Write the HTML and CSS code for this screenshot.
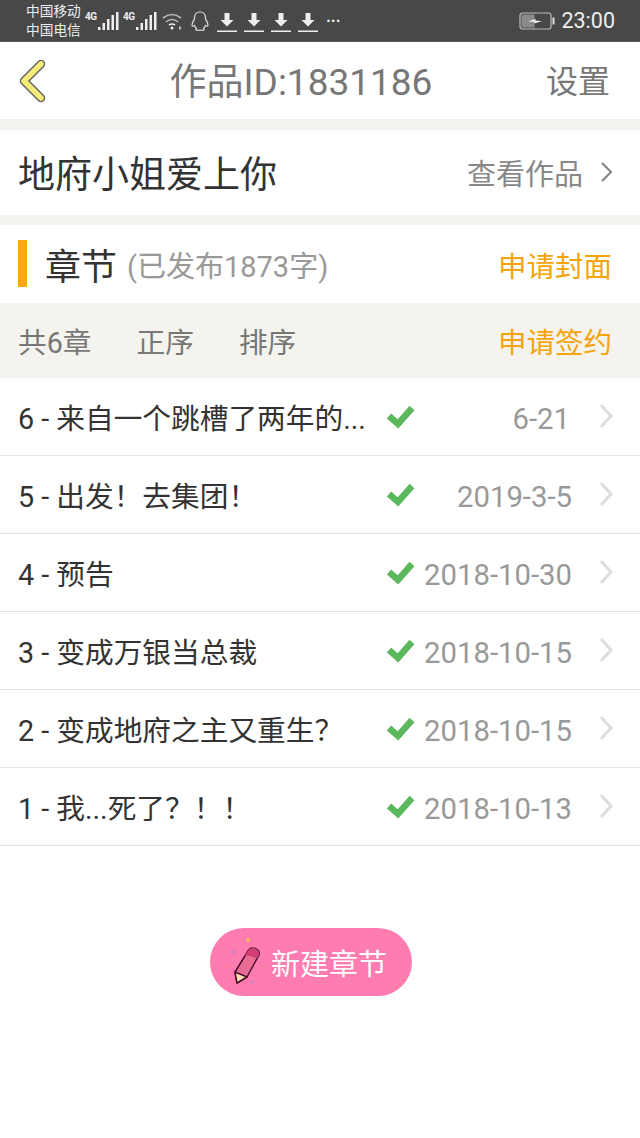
FILE: index.html
```html
<!DOCTYPE html>
<html lang="zh">
<head>
    <meta charset="UTF-8">
    <title>作品ID:1831186</title>
    <link rel="stylesheet" href="styles.css">
</head>
<body>
    <div class="status-bar">
        <div class="carrier"><span>中国移动</span><span>中国电信</span></div>
        <div class="signal">
            <span class="net">4G</span>
            <svg width="22" height="20" viewBox="0 0 22 20"><path d="M1 16h2.500v3H1zM5.500 12h2.500v7H5.500zM10 8h2.500v11H10zM14.500 4h2.500v15h-2.500zM19 1h2.500v18H19z" fill="#eee"/></svg>
        </div>
        <div class="signal">
            <span class="net">4G</span>
            <svg width="22" height="20" viewBox="0 0 22 20"><path d="M1 16h2.500v3H1zM5.500 12h2.500v7H5.500zM10 8h2.500v11H10zM14.500 4h2.500v15h-2.500zM19 1h2.500v18H19z" fill="#eee"/></svg>
        </div>
        <svg class="wifi" width="24" height="20" viewBox="0 0 24 20" fill="none" stroke="#bbb" stroke-width="1.600"><path d="M2 7q9-7 18 0M5 11q6-5 12 0"/><path d="M8 14q3-2 6 0" stroke="#eee"/><circle cx="11" cy="17" r="1.500" fill="#eee" stroke="none"/><path d="M18 15l3 2-3 2z" fill="#bbb" stroke="none"/></svg>
        <svg class="qq" width="20" height="22" viewBox="0 0 20 22" fill="none" stroke="#ddd" stroke-width="1.200"><path d="M10 2c-4 0-5.500 3-5.500 6 0 2-2.500 4.500-2.500 7 0 1.500 1 1.500 2.500 .5 .5 1.500 1 2 2 3-1 .5-1 2 1 2 1.500 0 2-.5 2.500-.5s1 .5 2.500 .5c2 0 2-1.500 1-2 1-1 1.500-1.500 2-3 1.500 1 2.500 1 2.500-.5 0-2.500-2.500-5-2.500-7 0-3-1.500-6-5.500-6z"/></svg>
        <div class="downloads">
            <svg width="20" height="20" viewBox="0 0 20 20"><path d="M7.500 1h5v7h4L10 14.500 3.500 8h4zM0 18.500h20V20H0z" fill="#eee"/></svg>
            <svg width="20" height="20" viewBox="0 0 20 20"><path d="M7.500 1h5v7h4L10 14.500 3.500 8h4zM0 18.500h20V20H0z" fill="#eee"/></svg>
            <svg width="20" height="20" viewBox="0 0 20 20"><path d="M7.500 1h5v7h4L10 14.500 3.500 8h4zM0 18.500h20V20H0z" fill="#eee"/></svg>
            <svg width="20" height="20" viewBox="0 0 20 20"><path d="M7.500 1h5v7h4L10 14.500 3.500 8h4zM0 18.500h20V20H0z" fill="#eee"/></svg>
        </div>
        <span class="more">···</span>
        <div class="status-right">
            <svg width="36" height="18" viewBox="0 0 36 18"><rect x="1" y="1" width="31" height="16" rx="2.500" fill="none" stroke="#bbb" stroke-width="1.200"/><rect x="2.500" y="2.500" width="13" height="13" fill="#8a8a8a"/><rect x="33.500" y="5.500" width="2" height="7" fill="#ddd"/><path d="M9 9.500l8-2.500-1 1.800 7 .2-8 2.500 1-1.800z" fill="#fff"/></svg>
            <span class="clock">23:00</span>
        </div>
    </div>

    <div class="top-bar">
        <svg class="back" width="30" height="44" viewBox="0 0 30 44"><path d="M24 5L7 22l17 17" fill="none" stroke="#666" stroke-width="8.500" stroke-linecap="round" stroke-linejoin="round"/><path d="M24 5L7 22l17 17" fill="none" stroke="#f6ec78" stroke-width="5.500" stroke-linecap="round" stroke-linejoin="round"/></svg>
        <div class="top-title">作品ID:1831186</div>
        <div class="top-action">设置</div>
    </div>

    <div class="book-row">
        <div class="book-name">地府小姐爱上你</div>
        <div class="book-link">查看作品
            <svg width="14" height="22" viewBox="0 0 14 22"><path d="M2 2l9 9-9 9" fill="none" stroke="#888" stroke-width="2.200"/></svg>
        </div>
    </div>

    <div class="section-head">
        <span class="section-mark"></span>
        <span class="section-title">章节</span>
        <span class="section-note">(已发布1873字)</span>
        <span class="orange-link">申请封面</span>
    </div>

    <div class="toolbar">
        <span>共6章</span>
        <span>正序</span>
        <span>排序</span>
        <span class="orange-link">申请签约</span>
    </div>

    <div class="chapter-list">
        <div class="chapter">
            <span class="chapter-name">6 - 来自一个跳槽了两年的...</span>
            <svg class="check" width="30" height="26" viewBox="0 0 30 26"><path d="M4 13l9 8L27 5" fill="none" stroke="#5cb85c" stroke-width="6.500"/></svg>
            <span class="chapter-date short">6-21</span>
            <svg class="arrow" width="16" height="26" viewBox="0 0 16 26"><path d="M3 2l10 11L3 24" fill="none" stroke="#ddd" stroke-width="3"/></svg>
        </div>
        <div class="chapter">
            <span class="chapter-name">5 - 出发！去集团！</span>
            <svg class="check" width="30" height="26" viewBox="0 0 30 26"><path d="M4 13l9 8L27 5" fill="none" stroke="#5cb85c" stroke-width="6.500"/></svg>
            <span class="chapter-date">2019-3-5</span>
            <svg class="arrow" width="16" height="26" viewBox="0 0 16 26"><path d="M3 2l10 11L3 24" fill="none" stroke="#ddd" stroke-width="3"/></svg>
        </div>
        <div class="chapter">
            <span class="chapter-name">4 - 预告</span>
            <svg class="check" width="30" height="26" viewBox="0 0 30 26"><path d="M4 13l9 8L27 5" fill="none" stroke="#5cb85c" stroke-width="6.500"/></svg>
            <span class="chapter-date">2018-10-30</span>
            <svg class="arrow" width="16" height="26" viewBox="0 0 16 26"><path d="M3 2l10 11L3 24" fill="none" stroke="#ddd" stroke-width="3"/></svg>
        </div>
        <div class="chapter">
            <span class="chapter-name">3 - 变成万银当总裁</span>
            <svg class="check" width="30" height="26" viewBox="0 0 30 26"><path d="M4 13l9 8L27 5" fill="none" stroke="#5cb85c" stroke-width="6.500"/></svg>
            <span class="chapter-date">2018-10-15</span>
            <svg class="arrow" width="16" height="26" viewBox="0 0 16 26"><path d="M3 2l10 11L3 24" fill="none" stroke="#ddd" stroke-width="3"/></svg>
        </div>
        <div class="chapter">
            <span class="chapter-name">2 - 变成地府之主又重生？</span>
            <svg class="check" width="30" height="26" viewBox="0 0 30 26"><path d="M4 13l9 8L27 5" fill="none" stroke="#5cb85c" stroke-width="6.500"/></svg>
            <span class="chapter-date">2018-10-15</span>
            <svg class="arrow" width="16" height="26" viewBox="0 0 16 26"><path d="M3 2l10 11L3 24" fill="none" stroke="#ddd" stroke-width="3"/></svg>
        </div>
        <div class="chapter">
            <span class="chapter-name">1 - 我...死了？！！</span>
            <svg class="check" width="30" height="26" viewBox="0 0 30 26"><path d="M4 13l9 8L27 5" fill="none" stroke="#5cb85c" stroke-width="6.500"/></svg>
            <span class="chapter-date">2018-10-13</span>
            <svg class="arrow" width="16" height="26" viewBox="0 0 16 26"><path d="M3 2l10 11L3 24" fill="none" stroke="#ddd" stroke-width="3"/></svg>
        </div>
    </div>

    <div class="new-wrap">
        <div class="new-btn">
            <svg class="pencil" width="40" height="50" viewBox="0 0 40 50">
                <circle cx="22" cy="3" r="2.200" fill="#f7b267"/>
                <circle cx="7" cy="15" r="1.200" fill="#a08cd8"/>
                <circle cx="3" cy="30" r="1.200" fill="#f08a8a"/>
                <circle cx="36" cy="30" r="1.400" fill="#f08a8a"/>
                <circle cx="26" cy="45" r="1.200" fill="#a08cd8"/>
                <path d="M22 14c3-6 13-2 11 4L21 40l-10 6-2-11z" fill="#ea6b94" stroke="#4a1430" stroke-width="1.500" stroke-linejoin="round"/>
                <path d="M22 14c3-6 13-2 11 4l-2 3-12-3z" fill="#d23f74"/>
                <path d="M9 35l12 5-10 6z" fill="#fde3b0" stroke="#4a1430" stroke-width="1.500" stroke-linejoin="round"/>
            </svg>
            <span>新建章节</span>
        </div>
    </div>
</body>
</html>
```

FILE: styles.css
```css
* {
    box-sizing: border-box;
}
body {
    margin: 0;
    background: #fff;
    color: #333;
    font-family: Roboto, "Noto Sans CJK SC", sans-serif;
}
.status-bar {
    height: 42px;
    background: #484848;
    border-bottom: 1px solid #5a5a5a;
    display: flex;
    align-items: center;
    padding: 0 25px 0 26px;
    color: #eee;
}
.carrier {
    display: flex;
    flex-direction: column;
    font-size: 13.700px;
    line-height: 19px;
    width: 59px;
    white-space: nowrap;
}
.signal {
    display: flex;
    align-items: flex-start;
    width: 38px;
}
.net {
    font-size: 10px;
    font-weight: bold;
    line-height: 10px;
    letter-spacing: -0.500px;
    margin-top: 1px;
    width: 12px;
}
.qq {
    margin-left: 5px;
}
.downloads {
    display: flex;
    gap: 7px;
    margin-left: 7px;
    margin-top: 2px;
}
.more {
    margin-left: 8px;
    font-size: 16px;
    font-weight: bold;
}
.status-right {
    margin-left: auto;
    display: flex;
    align-items: center;
    gap: 6px;
}
.clock {
    font-size: 21.500px;
}
.top-bar {
    height: 78px;
    border-bottom: 1px solid #eee;
    display: flex;
    align-items: center;
    padding: 0 30px 0 17px;
}
.back {
    flex: none;
}
.top-title {
    flex: 1;
    text-align: center;
    font-size: 37px;
    color: #777;
    padding: 0 0 4px 9px;
    white-space: nowrap;
}
.top-action {
    font-size: 32px;
    color: #777;
    padding-bottom: 4px;
}
.book-row {
    height: 95px;
    border-top: 10px solid #f4f3ee;
    display: flex;
    align-items: center;
    justify-content: space-between;
    padding: 0 26px 2px 18px;
}
.book-name {
    font-size: 37px;
    color: #333;
}
.book-link {
    display: flex;
    align-items: center;
    gap: 17px;
    font-size: 29px;
    color: #888;
}
.section-head {
    height: 88px;
    border-top: 10px solid #f4f3ee;
    display: flex;
    align-items: center;
    padding: 0 28px 0 18px;
}
.section-mark {
    width: 9px;
    height: 47px;
    background: #ffa80a;
    margin: -1px 18px 0 0;
}
.section-title {
    font-size: 36px;
    color: #333;
    margin-right: 10px;
}
.section-note {
    font-size: 29px;
    color: #999;
}
.orange-link {
    margin-left: auto;
    font-size: 28.500px;
    color: #f5a40c;
}
.toolbar {
    height: 75px;
    background: #f4f3ee;
    display: flex;
    align-items: center;
    gap: 45px;
    padding: 0 28px 0 18px;
    font-size: 28.700px;
    color: #777;
}
.chapter {
    height: 78px;
    border-bottom: 1px solid #e4e4e4;
    display: flex;
    align-items: center;
    padding: 0 26px 0 18px;
}
.chapter-name {
    flex: 1;
    font-size: 28.700px;
    color: #333;
    white-space: nowrap;
}
.check {
    flex: none;
    margin: -2px 1px 0 -1px;
}
.chapter-date {
    flex: none;
    width: 156px;
    text-align: right;
    font-size: 29.300px;
    color: #999;
    margin-top: 5px;
}
.chapter-date.short {
    padding-right: 2px;
}
.arrow {
    flex: none;
    margin-left: 26px;
    margin-top: -2px;
}
.new-wrap {
    display: flex;
    justify-content: center;
    padding: 82px 18px 0 0;
}
.new-btn {
    width: 202px;
    height: 68px;
    border-radius: 34px;
    background: #ff7cb0;
    display: flex;
    align-items: center;
    padding-left: 16px;
    gap: 5px;
    font-size: 29px;
    color: #fff;
}
```
